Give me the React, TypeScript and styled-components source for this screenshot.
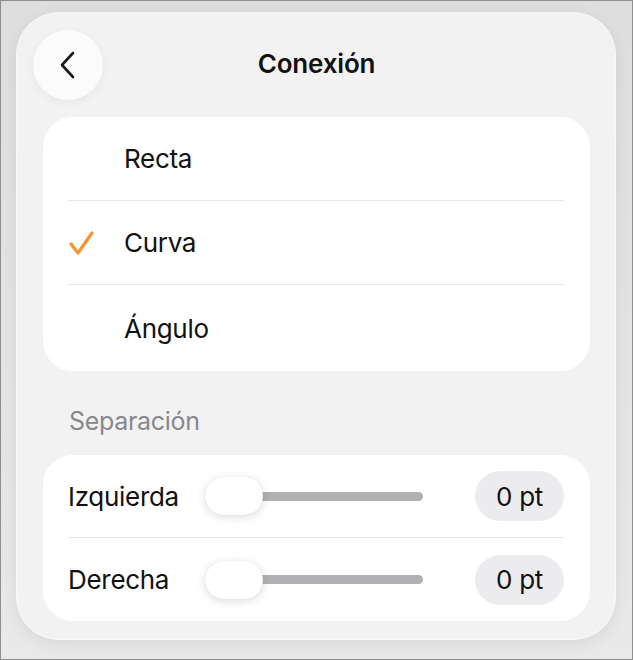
import styled, { createGlobalStyle } from 'styled-components';

const GlobalStyle = createGlobalStyle`
  html, body {
    margin: 0;
    padding: 0;
  }
  body {
    font-family: Inter, "Noto Sans", sans-serif;
    -webkit-font-smoothing: antialiased;
  }
`;

const Frame = styled.div`
  box-sizing: border-box;
  width: 633px;
  height: 660px;
  border: 1px solid #8f8f8f;
  background: linear-gradient(180deg, #dedede 0%, #e9e9e9 100%);
  padding: 12px 17px 20px 16px;
`;

const Panel = styled.div`
  box-sizing: border-box;
  height: 100%;
  background: #f2f2f3;
  border-radius: 42px;
  box-shadow: 0 0 0 1px rgba(255, 255, 255, 0.8), 0 4px 18px rgba(0, 0, 0, 0.08);
  padding: 17px 25px 0 26px;
`;

const Header = styled.div`
  display: grid;
  grid-template-columns: 70px 1fr 60px;
  align-items: center;
  margin-left: -10px;
  margin-bottom: 17px;
`;

const BackButton = styled.button`
  width: 70px;
  height: 70px;
  border-radius: 50%;
  border: none;
  background: #fbfbfc;
  box-shadow: 0 2px 10px rgba(0, 0, 0, 0.05);
  display: flex;
  align-items: center;
  justify-content: center;
  padding: 0;
`;

const Title = styled.h1`
  margin: 0;
  text-align: center;
  font-size: 26px;
  font-weight: 600;
  color: #111;
  letter-spacing: -0.2px;
  line-height: 30px;
  transform: translateY(-1px);
`;

const Card = styled.div`
  background: #ffffff;
  border-radius: 30px;
  padding: 0 26px 0 25px;
`;

const OptionRow = styled.div<{ $last?: boolean }>`
  height: ${p => (p.$last ? '86px' : '84px')};
  display: flex;
  align-items: center;
  border-bottom: ${p => (p.$last ? 'none' : '1.5px solid #e6e6e8')};
  box-sizing: border-box;
`;

const CheckSlot = styled.div`
  width: 56px;
  display: flex;
  align-items: center;
`;

const RowText = styled.span`
  font-size: 26px;
  color: #111;
  letter-spacing: -0.3px;
`;

const SectionLabel = styled.div`
  box-sizing: border-box;
  font-size: 25px;
  line-height: 30px;
  color: #88888c;
  padding: 35px 0 0 26px;
  height: 84px;
  letter-spacing: -0.3px;
`;

const SliderRow = styled.div<{ $last?: boolean }>`
  height: 83px;
  display: grid;
  grid-template-columns: 137px 218px 1fr auto;
  align-items: center;
  border-bottom: ${p => (p.$last ? 'none' : '1.5px solid #e6e6e8')};
  box-sizing: border-box;
`;

const Slider = styled.div`
  position: relative;
  height: 38px;
  display: flex;
  align-items: center;
`;

const Track = styled.div`
  margin-left: 29px;
  width: 189px;
  height: 9px;
  border-radius: 5px;
  background: #b1b1b3;
`;

const Thumb = styled.div`
  position: absolute;
  left: 0;
  top: 0;
  width: 58px;
  height: 38px;
  border-radius: 19px;
  background: #fff;
  box-shadow: 0 2px 10px rgba(0, 0, 0, 0.14), 0 0 1px rgba(0, 0, 0, 0.1);
`;

const ValuePill = styled.div`
  width: 89px;
  height: 50px;
  border-radius: 25px;
  background: #ececee;
  display: flex;
  align-items: center;
  justify-content: center;
  font-size: 26px;
  color: #111;
  letter-spacing: -0.3px;
`;

const options = [
  { label: 'Recta', checked: false },
  { label: 'Curva', checked: true },
  { label: 'Ángulo', checked: false },
];

const sliders = ['Izquierda', 'Derecha'];

export default function App() {
  return (
    <>
      <GlobalStyle />
      <Frame>
        <Panel>
          <Header>
            <BackButton aria-label="Atrás">
              <svg width="20" height="32" viewBox="0 0 20 32">
                <path d="M15 4 L4 16 L15 28" fill="none" stroke="#1a1a1a" strokeWidth="2.6" strokeLinecap="round" strokeLinejoin="round" />
              </svg>
            </BackButton>
            <Title>Conexión</Title>
            <span />
          </Header>
          <Card>
            {options.map((o, i) => (
              <OptionRow key={o.label} $last={i === options.length - 1}>
                <CheckSlot>
                  {o.checked && (
                    <svg width="27" height="26" viewBox="0 0 27 26">
                      <path d="M3 14 L10 23 L24 3" fill="none" stroke="#f7932f" strokeWidth="3.2" strokeLinecap="round" strokeLinejoin="round" />
                    </svg>
                  )}
                </CheckSlot>
                <RowText>{o.label}</RowText>
              </OptionRow>
            ))}
          </Card>
          <SectionLabel>Separación</SectionLabel>
          <Card>
            {sliders.map((s, i) => (
              <SliderRow key={s} $last={i === sliders.length - 1}>
                <RowText>{s}</RowText>
                <Slider>
                  <Track />
                  <Thumb />
                </Slider>
                <span />
                <ValuePill>0 pt</ValuePill>
              </SliderRow>
            ))}
          </Card>
        </Panel>
      </Frame>
    </>
  );
}
